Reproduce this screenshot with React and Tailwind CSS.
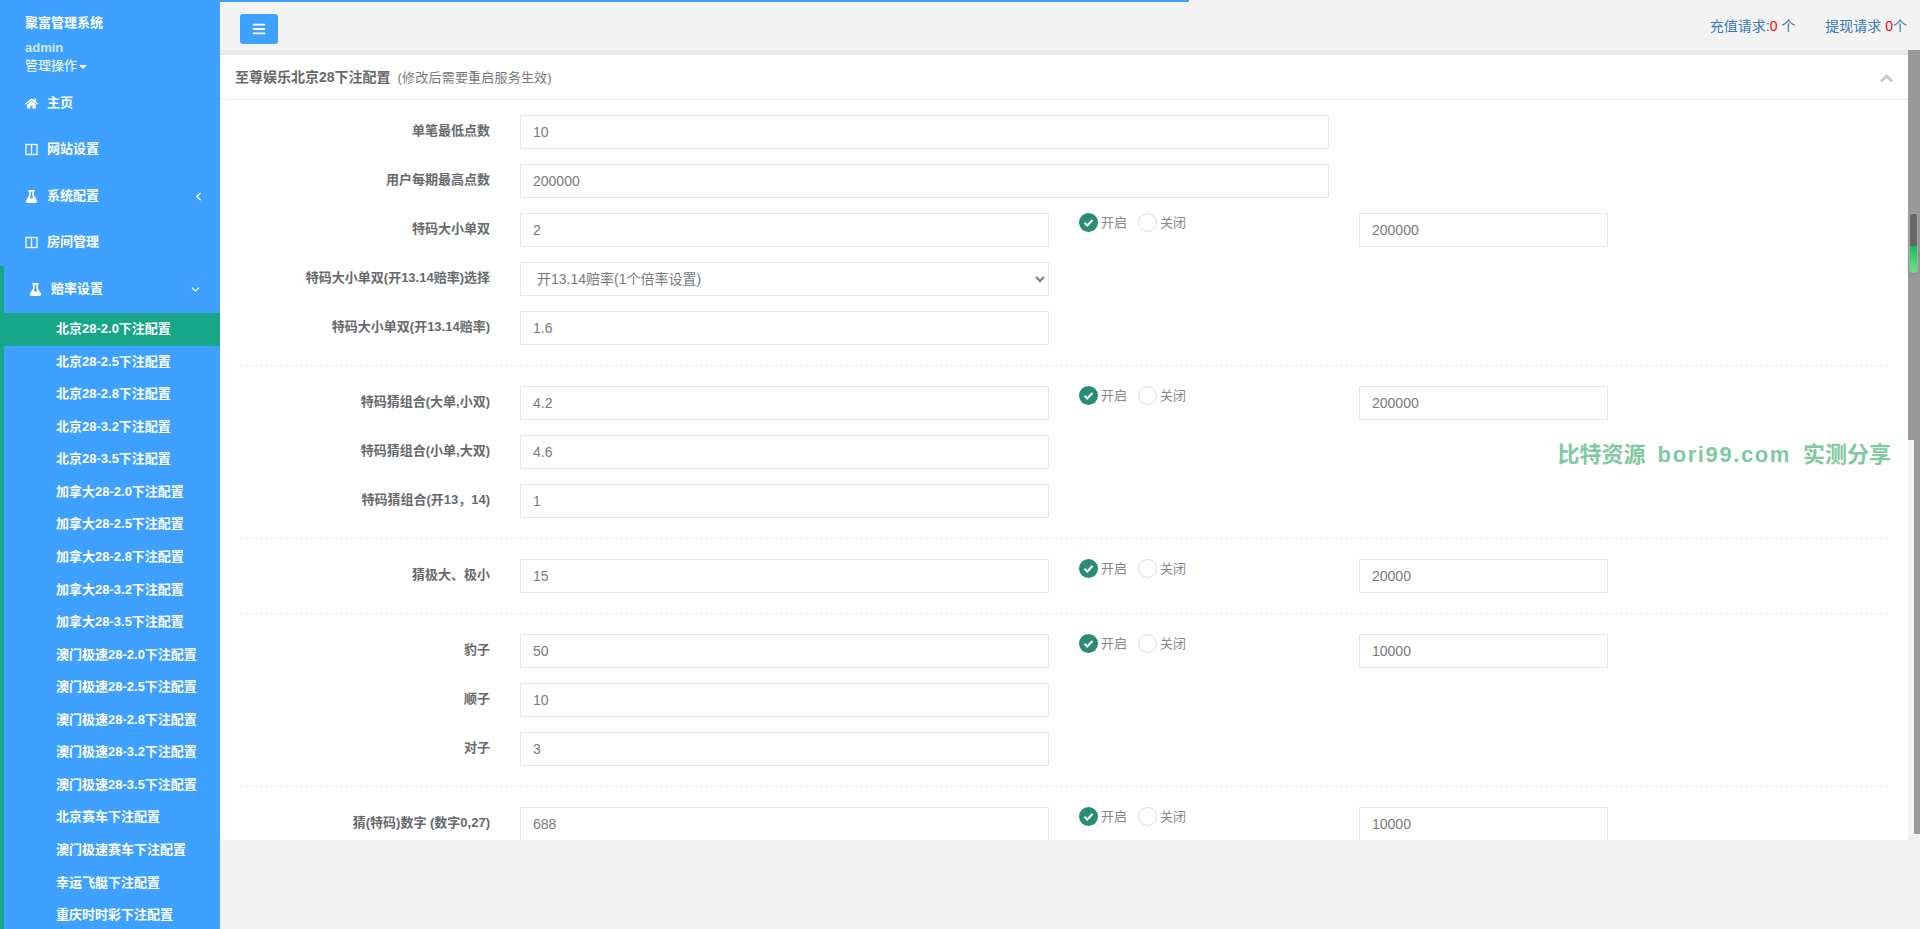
import { FaBars, FaFlask, FaHome } from "react-icons/fa";
import { ChevronDown, ChevronLeft } from "lucide-react";

const versions = ["2.0", "2.5", "2.8", "3.2", "3.5"];
const subItems = [
    ...versions.map((v) => `北京28-${v}下注配置`),
    ...versions.map((v) => `加拿大28-${v}下注配置`),
    ...versions.map((v) => `澳门极速28-${v}下注配置`),
    "北京赛车下注配置",
    "澳门极速赛车下注配置",
    "幸运飞艇下注配置",
    "重庆时时彩下注配置",
];

const ColumnsIcon = ({ className }) => (
    <svg viewBox="0 0 13 13" className={className} fill="none" stroke="currentColor" strokeWidth="1.3">
        <rect x="1" y="1.5" width="11" height="10" />
        <path d="M6.5 1.5v10" />
    </svg>
);

const NavItem = ({ icon: Icon, label, arrow: Arrow }) => (
    <div className="flex items-center h-[46.5px] pl-[25px] pr-[15px] text-white font-bold">
        <Icon className="w-[13px] h-[13px] shrink-0" />
        <span className="ml-[9px] flex-1">{label}</span>
        {Arrow && <Arrow className="w-[13px] h-[13px]" strokeWidth={2.5} />}
    </div>
);

const Sidebar = () => (
    <aside className="w-[220px] h-[929px] shrink-0 overflow-hidden bg-[#3ea1ff] text-[13px] leading-[18.57px]">
        <div className="pt-[14px] pl-[25px] h-[80px]">
            <div className="text-white font-bold">聚富管理系统</div>
            <div className="mt-[6px] text-[#d3e6fa] font-bold">admin</div>
            <div className="flex items-center text-white">
                管理操作
                <span className="ml-[2px] mt-[1px] w-0 h-0 border-x-4 border-t-4 border-x-transparent border-t-white" />
            </div>
        </div>
        <NavItem icon={FaHome} label="主页" />
        <NavItem icon={ColumnsIcon} label="网站设置" />
        <NavItem icon={FaFlask} label="系统配置" arrow={ChevronLeft} />
        <NavItem icon={ColumnsIcon} label="房间管理" />
        <div className="border-l-4 border-[#18a689]">
            <div className="flex items-center h-[47px] pl-[25px] pr-[18px] text-white font-bold">
                <FaFlask className="w-[13px] h-[13px] shrink-0" />
                <span className="ml-[9px] flex-1">赔率设置</span>
                <ChevronDown className="w-[13px] h-[13px]" strokeWidth={2.5} />
            </div>
            {subItems.map((item, i) => (
                <div
                    key={item}
                    className={`pl-[52px] py-[7px] text-white font-bold ${i === 0 ? "bg-[#18a689]" : ""}`}
                >
                    {item}
                </div>
            ))}
        </div>
    </aside>
);

const Radio = ({ checked, label }) => (
    <label className="flex items-center text-[13px] text-[#888]">
        {checked ? (
            <svg viewBox="0 0 19 19" className="w-[19px] h-[19px]">
                <circle cx="9.5" cy="9.5" r="9.5" fill="#2a8c74" />
                <path d="M5.5 9.7l2.8 2.8 5.2-5.4" fill="none" stroke="#fff" strokeWidth="2.2" />
            </svg>
        ) : (
            <span className="w-[19px] h-[19px] rounded-full border border-[#e0ddd5] bg-white" />
        )}
        <span className="ml-[3px] leading-[18px]">{label}</span>
    </label>
);

const textInput = "block h-[34px] px-[12px] border border-[#e5e6e7] bg-white text-[14px] text-[#777a7c] outline-none";

const Row = ({ label, value, long, limit, select }) => (
    <div className="flex mb-[15px]">
        <label className="w-[250px] shrink-0 pt-[7px] text-right font-bold text-[13px] leading-[18.57px] text-[#676a6c]">
            {label}
        </label>
        {select ? (
            <select defaultValue="1" className={`${textInput} ml-[30px] w-[529px]`}>
                <option value="1">{value}</option>
            </select>
        ) : (
            <input defaultValue={value} className={`${textInput} ml-[30px] ${long ? "w-[809px]" : "w-[529px]"}`} />
        )}
        {limit && (
            <>
                <div className="ml-[30px] w-[250px] flex gap-[11px] items-start h-[20px]">
                    <Radio checked label="开启" />
                    <Radio label="关闭" />
                </div>
                <input defaultValue={limit} className={`${textInput} ml-[30px] w-[249px]`} />
            </>
        )}
    </div>
);

const Divider = () => <div className="mt-[20px] mb-[20px] border-t border-dashed border-[#e7eaec]" />;

const ConfigPanel = () => (
    <div className="relative h-[785px] overflow-hidden bg-white">
        <div className="flex items-center justify-between h-[45px] pl-[15px] pr-[15px] pb-[1px] border-b border-[#e7eaec]">
            <div className="text-[#676a6c]">
                <span className="text-[14px] font-bold">至尊娱乐北京28下注配置</span>
                <span className="ml-[7px] text-[13px] tracking-[0.2px] text-[#777]">(修改后需要重启服务生效)</span>
            </div>
            <svg viewBox="0 0 13 9" className="w-[13px] h-[9px] mt-[4px]" fill="none" stroke="#c9cbcc" strokeWidth="3">
                <path d="M1 7.5l5.5-5.5 5.5 5.5" />
            </svg>
        </div>
        <div className="px-[20px] pt-[15px]">
            <Row label="单笔最低点数" value="10" long />
            <Row label="用户每期最高点数" value="200000" long />
            <Row label="特码大小单双" value="2" limit="200000" />
            <Row label="特码大小单双(开13.14赔率)选择" value="开13.14赔率(1个倍率设置)" select />
            <Row label="特码大小单双(开13.14赔率)" value="1.6" />
            <Divider />
            <Row label="特码猜组合(大单,小双)" value="4.2" limit="200000" />
            <Row label="特码猜组合(小单,大双)" value="4.6" />
            <Row label="特码猜组合(开13，14)" value="1" />
            <Divider />
            <Row label="猜极大、极小" value="15" limit="20000" />
            <Divider />
            <Row label="豹子" value="50" limit="10000" />
            <Row label="顺子" value="10" />
            <Row label="对子" value="3" />
            <Divider />
            <Row label="猜(特码)数字 (数字0,27)" value="688" limit="10000" />
        </div>
        <div className="absolute top-[388px] right-[17px] flex gap-[12px] items-center text-[22px] leading-[24px] font-semibold whitespace-pre text-[#80c9a0]">
            <span>比特资源</span>
            <span className="tracking-[1.6px]">bori99.com</span>
            <span>实测分享</span>
        </div>
    </div>
);

const ScrollRail = () => (
    <div className="relative w-[12px] shrink-0">
        <div className="h-[390px] bg-[#999]" />
        <div className="flex h-[394px]">
            <div className="w-[6px] bg-[#f5f5f5]" />
            <div className="w-[6px] bg-[#999]" />
        </div>
        <div className="h-px w-[6px] bg-[#f5f5f5]" />
        <div className="absolute top-[163px] left-[1px] w-[9px] h-[60px] rounded-[3px] border border-[#aaa] overflow-hidden shadow-md">
            <div className="h-[32px] bg-[#666]" />
            <div className="h-[26px] bg-gradient-to-b from-[#17b85f] to-[#5fe87f]" />
        </div>
    </div>
);

const App = () => (
    <div className="relative flex h-[929px] overflow-hidden bg-[#f1f1f1] font-['Liberation_Sans','Noto_Sans_CJK_SC',sans-serif]">
        <div className="absolute top-0 left-0 h-[2px] w-[1189px] bg-[#3ea1ff]" />
        <Sidebar />
        <main className="flex-1 min-w-0">
            <header className="flex items-center justify-between h-[50px] pl-[20px] pr-[13px] pt-[8px] bg-[#f3f3f4] text-[14px] text-[#337ab7]">
                <button className="flex items-center justify-center w-[38px] h-[30px] rounded-[3px] bg-[#3ea1ff] text-white">
                    <FaBars className="w-[14px] h-[14px]" />
                </button>
                <div className="flex gap-[30px] -mt-[6px]">
                    <span>充值请求:<span className="text-[#f00]">0</span> 个</span>
                    <span>提现请求 <span className="text-[#f00]">0</span>个</span>
                </div>
            </header>
            <div className="flex">
                <div className="flex-1 min-w-0 pt-[5px] bg-[#e7eaec] self-start">
                    <ConfigPanel />
                </div>
                <ScrollRail />
            </div>
        </main>
    </div>
);

export default App;
